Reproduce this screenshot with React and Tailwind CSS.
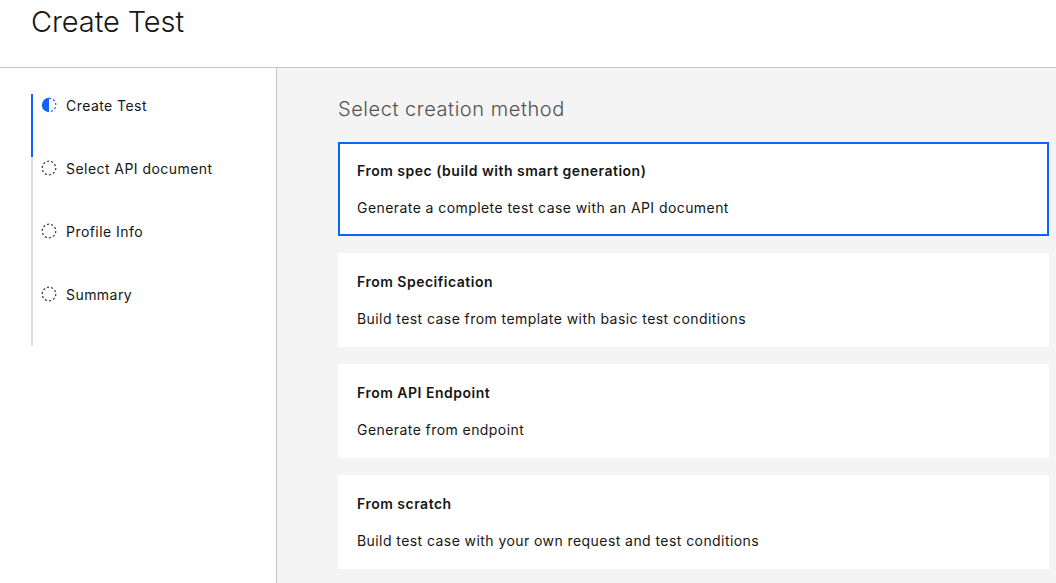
import React from "react";

const steps = [
  { label: "Create Test", current: true },
  { label: "Select API document" },
  { label: "Profile Info" },
  { label: "Summary" },
];

const methods = [
  {
    title: "From spec (build with smart generation)",
    text: "Generate a complete test case with an API document",
    selected: true,
  },
  {
    title: "From Specification",
    text: "Build test case from template with basic test conditions",
  },
  { title: "From API Endpoint", text: "Generate from endpoint" },
  {
    title: "From scratch",
    text: "Build test case with your own request and test conditions",
  },
];

// dashed circle used for steps not started yet
const DashCircle = () => (
  <svg width="16" height="16" viewBox="0 0 16 16" className="shrink-0">
    <circle cx="8" cy="8" r="6.8" fill="none" stroke="#393939" strokeWidth="1.2" strokeDasharray="2.2 2.05" />
  </svg>
);

// half filled circle for the current step
const HalfCircle = () => (
  <svg width="16" height="16" viewBox="0 0 16 16" className="shrink-0">
    <path d="M8 0.8 A7.2 7.2 0 0 0 8 15.2 Z" fill="#0f62fe" />
    <path d="M8 1.2 A6.8 6.8 0 0 1 8 14.8" fill="none" stroke="#0f62fe" strokeWidth="1.2" strokeDasharray="2.2 2.05" />
  </svg>
);

const App = () => {
  return (
    <div className="w-[1056px] h-[583px] overflow-hidden bg-white text-[#161616] flex flex-col" style={{ fontFamily: "Inter, 'Noto Sans', sans-serif" }}>
      {/* Page header */}
      <div className="h-[68px] shrink-0 border-b border-[#c6c6c6] px-[31px] pt-[2px]">
        <h1 className="text-[29px] leading-[40px] font-light tracking-[-0.1px]">Create Test</h1>
      </div>

      <div className="flex flex-1 min-h-0">
        {/* Progress indicator */}
        <div className="w-[277px] shrink-0 border-r border-[#c6c6c6] pl-[31px] pt-[26px]">
          {steps.map((step) => (
            <div
              key={step.label}
              className={`h-[63px] border-l-2 pl-[8px] pt-[3px] flex items-start gap-[9px] ${step.current ? "border-[#0f62fe]" : "border-[#e0e0e0]"}`}
            >
              {step.current ? <HalfCircle /> : <DashCircle />}
              <span className="text-[14px] leading-[18px] tracking-[0.45px]">{step.label}</span>
            </div>
          ))}
        </div>

        {/* Creation methods */}
        <div className="flex-1 bg-[#f4f4f4] pl-[61px] pr-[7px] pt-[27px]">
          <h2 className="text-[20px] leading-[28px] font-light text-[#525252] tracking-[0.55px] mb-[19px]">Select creation method</h2>
          <div className="flex flex-col gap-[17px]">
            {methods.map((m) => (
              <div
                key={m.title}
                className={`h-[94px] bg-white ${m.selected ? "border-2 border-[#0f62fe] px-[17px] pt-[18px]" : "px-[19px] pt-[20px]"}`}
              >
                <div className="text-[14px] leading-[18px] font-semibold tracking-[0.5px]">{m.title}</div>
                <div className="text-[14px] leading-[18px] mt-[19px] tracking-[0.43px]">{m.text}</div>
              </div>
            ))}
          </div>
        </div>
      </div>
    </div>
  );
};

export default App;
